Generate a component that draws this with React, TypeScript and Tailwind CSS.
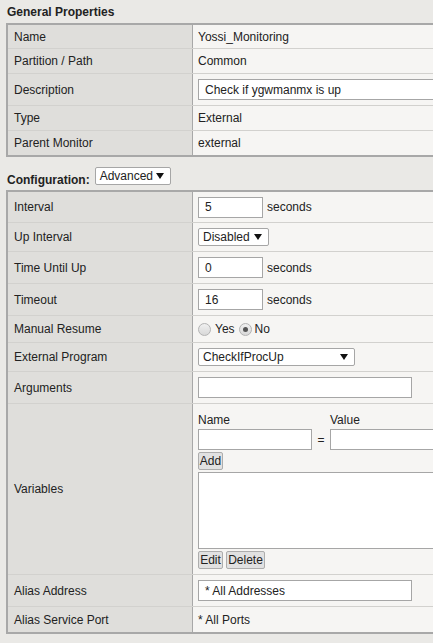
import clsx from 'clsx'
import type { ReactNode } from 'react'

type RowProps = {
  label: string
  h: string
  last?: boolean
  top?: boolean
  children?: ReactNode
}

const Row = ({ label, h, last, top, children }: RowProps) => (
  <div
    className={clsx(
      'grid grid-cols-[185px_1fr]',
      h,
      !last && 'border-b border-[#d2d1ce]'
    )}>
    <div className="bg-[#dfdedb] border-r border-[#a8a8a8] pl-[6px] flex items-center">
      {label}
    </div>
    <div
      className={clsx(
        'bg-[#f6f5f3] pl-[5px] flex',
        top ? 'flex-col items-start' : 'items-center'
      )}>
      {children}
    </div>
  </div>
)

const Arrow = () => (
  <svg width="8" height="6" viewBox="0 0 8 6" className="shrink-0">
    <polygon points="0,0 8,0 4,6" fill="#111" />
  </svg>
)

const TextBox = ({ w, value }: { w: string; value?: string }) => (
  <div
    className={clsx(
      'h-[21px] bg-white border border-[#a6a6a6] pl-[6px] flex items-center shrink-0',
      w
    )}>
    {value}
  </div>
)

const Select = ({ w, value, h }: { w: string; value: string; h: string }) => (
  <div
    className={clsx(
      'bg-white border border-[#a6a6a6] rounded-[2px] pl-[4px] pr-[6px] flex items-center justify-between shrink-0',
      w,
      h
    )}>
    <span>{value}</span>
    <Arrow />
  </div>
)

const Button = ({ children, w }: { children: ReactNode; w: string }) => (
  <div
    className={clsx(
      'h-[18px] bg-[#e1e1e1] border border-[#adadad] rounded-[2px] flex items-center justify-center',
      w
    )}>
    {children}
  </div>
)

const Radio = ({ checked }: { checked?: boolean }) => (
  <span className="w-[13px] h-[13px] rounded-full border border-[#b3b3b3] bg-gradient-to-b from-[#f0f0f0] to-[#d8d8d8] flex items-center justify-center shrink-0">
    {checked && <span className="w-[5px] h-[5px] rounded-full bg-[#555]" />}
  </span>
)

export default function App() {
  return (
    <div className="w-[433px] h-[643px] overflow-hidden bg-[#eae9e6] text-[12px] leading-[14px] text-[#222] font-['Liberation_Sans',Arial,sans-serif]">
      <div className="pt-[5px] pl-[7px] font-bold mb-[4px]">General Properties</div>

      <div className="ml-[6px] w-[700px] border-2 border-[#a8a8a8]">
        <Row label="Name" h="h-[24px]">Yossi_Monitoring</Row>
        <Row label="Partition / Path" h="h-[25px]">Common</Row>
        <Row label="Description" h="h-[32px]">
          <TextBox w="w-[400px]" value="Check if ygwmanmx is up" />
        </Row>
        <Row label="Type" h="h-[25px]">External</Row>
        <Row label="Parent Monitor" h="h-[24px]" last>
          external
        </Row>
      </div>

      <div className="flex items-start pl-[7px] pt-[10px] mb-[3px]">
        <span className="font-bold mt-[6px]">Configuration:</span>
        <div className="ml-[5px]">
          <Select w="w-[76px]" h="h-[18px]" value="Advanced" />
        </div>
      </div>

      <div className="ml-[6px] w-[700px] border-2 border-[#a8a8a8]">
        <Row label="Interval" h="h-[31px]">
          <TextBox w="w-[65px]" value="5" />
          <span className="ml-[4px]">seconds</span>
        </Row>
        <Row label="Up Interval" h="h-[29px]">
          <Select w="w-[71px]" h="h-[18px]" value="Disabled" />
        </Row>
        <Row label="Time Until Up" h="h-[32px]">
          <TextBox w="w-[65px]" value="0" />
          <span className="ml-[4px]">seconds</span>
        </Row>
        <Row label="Timeout" h="h-[32px]">
          <TextBox w="w-[65px]" value="16" />
          <span className="ml-[4px]">seconds</span>
        </Row>
        <Row label="Manual Resume" h="h-[27px]">
          <Radio />
          <span className="ml-[4px]">Yes</span>
          <span className="ml-[4px]">
            <Radio checked />
          </span>
          <span className="ml-[3px]">No</span>
        </Row>
        <Row label="External Program" h="h-[29px]">
          <Select w="w-[157px]" h="h-[18px]" value="CheckIfProcUp" />
        </Row>
        <Row label="Arguments" h="h-[32px]">
          <TextBox w="w-[214px]" />
        </Row>
        <Row label="Variables" h="h-[171px]" top>
          <div className="flex mt-[9px]">
            <span className="w-[132px]">Name</span>
            <span>Value</span>
          </div>
          <div className="flex items-center mt-[2px]">
            <TextBox w="w-[114px]" />
            <span className="w-[18px] text-center">=</span>
            <TextBox w="w-[200px]" />
          </div>
          <div className="mt-[2px]">
            <Button w="w-[25px]">Add</Button>
          </div>
          <div className="mt-[2px] w-[400px] h-[77px] bg-white border border-[#a6a6a6]" />
          <div className="flex gap-[3px] mt-[2px]">
            <Button w="w-[25px]">Edit</Button>
            <Button w="w-[39px]">Delete</Button>
          </div>
        </Row>
        <Row label="Alias Address" h="h-[32px]">
          <TextBox w="w-[214px]" value="* All Addresses" />
        </Row>
        <Row label="Alias Service Port" h="h-[25px]" last>
          * All Ports
        </Row>
      </div>
    </div>
  )
}
